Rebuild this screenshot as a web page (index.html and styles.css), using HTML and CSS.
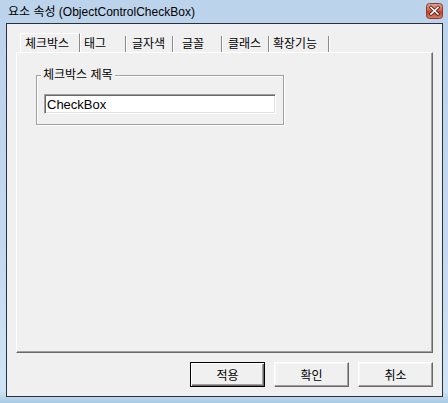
FILE: index.html
```html
<!DOCTYPE html>
<html lang="ko">
<head>
    <meta charset="UTF-8">
    <title>요소 속성</title>
    <link rel="stylesheet" href="styles.css">
</head>
<body>
    <div class="window">
        <div class="titlebar">
            <span class="title">요소 속성 (ObjectControlCheckBox)</span>
            <svg class="close" width="17" height="16" viewBox="0 0 17 16" aria-label="닫기">
                <defs>
                    <linearGradient id="closeFill" x1="0" y1="0" x2="0" y2="1">
                        <stop offset="0" stop-color="#e8a292"/>
                        <stop offset="0.48" stop-color="#d0604c"/>
                        <stop offset="0.55" stop-color="#bd3d2c"/>
                        <stop offset="1" stop-color="#d9806a"/>
                    </linearGradient>
                </defs>
                <rect x="0.5" y="0.5" width="16" height="15" rx="3" fill="url(#closeFill)" stroke="#8a3b31"/>
                <path d="M5 4.5 L12 11 M12 4.5 L5 11" stroke="#5a1f18" stroke-width="3.2" stroke-linecap="square"/>
                <path d="M5 4.5 L12 11 M12 4.5 L5 11" stroke="#fff" stroke-width="1.6" stroke-linecap="square"/>
            </svg>
        </div>
        <div class="client">
            <div class="tabs">
                <span class="tab active">체크박스</span>
                <span class="tab">태그</span>
                <span class="tab">글자색</span>
                <span class="tab">글꼴</span>
                <span class="tab">클래스</span>
                <span class="tab">확장기능</span>
            </div>
            <div class="panel">
                <fieldset class="group">
                    <legend>체크박스 제목</legend>
                    <input class="textbox" type="text" value="CheckBox">
                </fieldset>
            </div>
            <div class="buttons">
                <button class="btn default" type="button">적용</button>
                <button class="btn" type="button">확인</button>
                <button class="btn" type="button">취소</button>
            </div>
        </div>
    </div>
</body>
</html>
```

FILE: styles.css
```css
body {
    margin: 0;
    font-family: "Liberation Sans", "Noto Sans CJK KR", sans-serif;
    font-size: 12px;
    color: #000;
}
.window {
    width: 448px;
    height: 403px;
    box-sizing: border-box;
    padding: 0 5px 6px 6px;
    background: linear-gradient(to bottom, #bcd3ec 0%, #c4d9ef 60%, #cfe4f5 97%, #a9c9e3 100%);
    display: flex;
    flex-direction: column;
}
.titlebar {
    height: 23px;
    display: flex;
    align-items: center;
    justify-content: space-between;
}
.title {
    padding-left: 2px;
    line-height: 16px;
}
.close {
    display: block;
    margin-top: -2px;
}
.client {
    flex: 1;
    border: 1px solid #27313c;
    background-color: #f0f0f0;
    display: flex;
    flex-direction: column;
}
.tabs {
    display: flex;
    align-items: flex-end;
    height: 19px;
    margin: 9px 0 0 13px;
}
.tab {
    box-sizing: border-box;
    height: 16px;
    line-height: 17px;
    border-right: 1px solid #8a8a8a;
    box-shadow: 1px 0 0 #fff;
    white-space: nowrap;
}
.tab.active {
    height: 20px;
    line-height: 21px;
    margin-bottom: -1px;
    border-left: 1px solid #fff;
    border-top: 1px solid #fff;
    padding-left: 4px;
    background-color: #f0f0f0;
}
.tab:nth-child(1) { width: 60px; }
.tab:nth-child(2) { width: 46px; padding-left: 4px; }
.tab:nth-child(3) { width: 47px; padding-left: 6px; }
.tab:nth-child(4) { width: 49px; padding-left: 9px; }
.tab:nth-child(5) { width: 47px; padding-left: 6px; }
.tab:nth-child(6) { width: 60px; padding-left: 4px; }
.panel {
    height: 301px;
    box-sizing: border-box;
    margin: 0 9px 0 9px;
    padding: 15px 0 0 19px;
    border: 1px solid;
    border-color: #fff #696969 #696969 #fff;
    box-shadow: inset -1px -1px 0 #a0a0a0;
}
.group {
    width: 248px;
    box-sizing: border-box;
    margin: 0;
    padding: 12px 7px 10px 7px;
    border: 1px solid #a0a0a0;
    box-shadow: inset 1px 1px 0 #fff, 1px 1px 0 #fff;
}
.group legend {
    padding: 0 2px;
    margin-left: -3px;
    line-height: 14px;
    background-color: #f0f0f0;
}
.textbox {
    display: block;
    width: 232px;
    height: 20px;
    box-sizing: border-box;
    margin: 0;
    padding: 0 2px;
    font-family: "Liberation Sans", sans-serif;
    font-size: 13px;
    border: 1px solid;
    border-color: #a0a0a0 #fff #fff #a0a0a0;
    box-shadow: inset 1px 1px 0 #696969, inset -1px -1px 0 #e3e3e3;
    background-color: #fff;
    outline: none;
}
.buttons {
    display: flex;
    justify-content: flex-end;
    gap: 9px;
    margin: 9px 9px 0 0;
}
.btn {
    width: 75px;
    height: 25px;
    padding: 0;
    font-family: "Liberation Sans", "Noto Sans CJK KR", sans-serif;
    font-size: 12px;
    color: #000;
    background-color: #f0f0f0;
    border: 1px solid;
    border-color: #fff #696969 #696969 #fff;
    box-shadow: inset -1px -1px 0 #a0a0a0, inset 1px 1px 0 #f8f8f8;
}
.btn.default {
    border-color: #000;
    box-shadow: inset 1px 1px 0 #fff, inset -1px -1px 0 #696969, inset -2px -2px 0 #a0a0a0;
}
```
